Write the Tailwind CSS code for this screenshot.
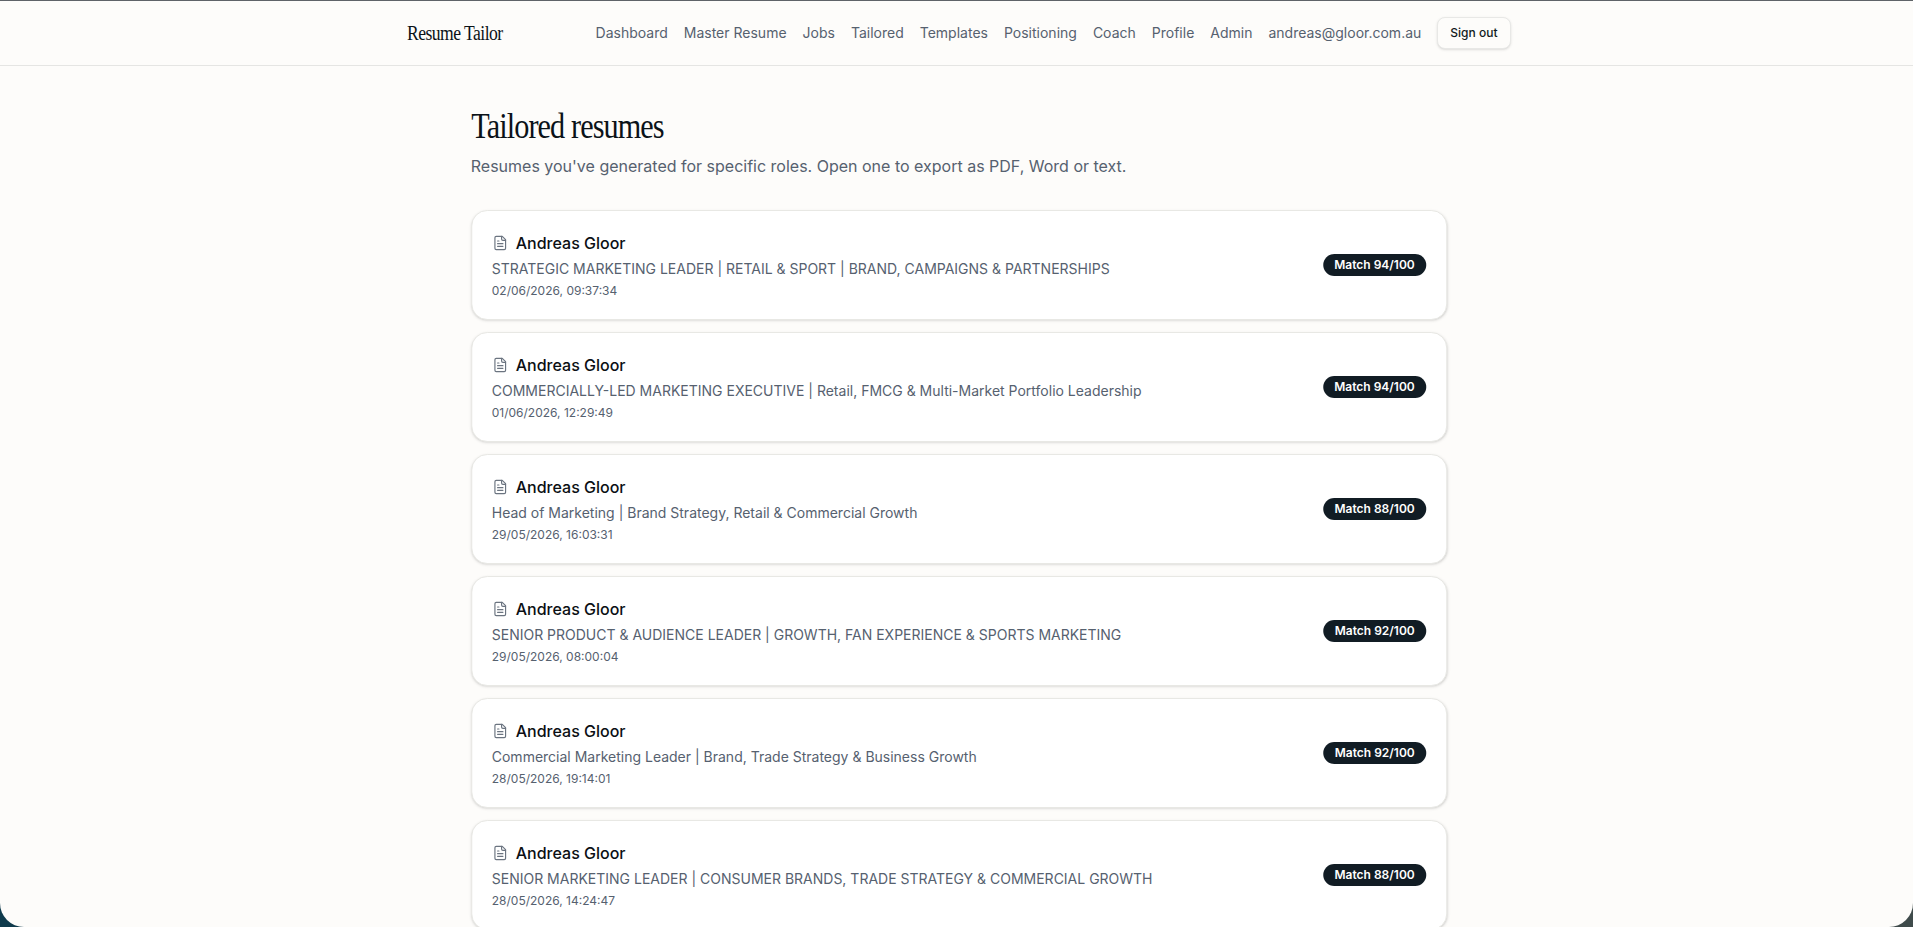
<!DOCTYPE html>
<html lang="en">
  <head>
    <meta charset="UTF-8" />
    <meta name="viewport" content="width=device-width, initial-scale=1.0" />
    <script src="https://cdn.jsdelivr.net/npm/@tailwindcss/browser@4"></script>
    <title>Tailored resumes - Resume Tailor</title>
  </head>
  <body class="h-[927px] overflow-hidden bg-gradient-to-r from-[#0f3a4c] to-[#3f4b4b] font-['Inter',sans-serif]">
    <div class="h-[927px] overflow-hidden rounded-b-[24px] border-t border-[#5f6368] bg-[#fdfcfa]">
      <!-- Nav -->
      <header class="border-b border-[#e5e5e3]">
        <div class="mx-auto flex h-16 max-w-6xl translate-x-[2px] items-center justify-between px-6">
          <a class="inline-block origin-left scale-x-[0.88] font-['Liberation_Serif',serif] text-xl tracking-[-0.03em] text-[#0b1218]">Resume Tailor</a>
          <nav class="flex items-center gap-4 text-sm text-[#56616f]">
            <a>Dashboard</a>
            <a>Master Resume</a>
            <a>Jobs</a>
            <a>Tailored</a>
            <a>Templates</a>
            <a>Positioning</a>
            <a>Coach</a>
            <a>Profile</a>
            <a>Admin</a>
            <a>andreas@gloor.com.au</a>
            <button class="h-8 rounded-lg border border-[#e8e8e6] bg-[#fdfcfa] px-3 text-xs font-medium text-[#111a21] shadow-sm">Sign out</button>
          </nav>
        </div>
      </header>

      <main class="mx-auto max-w-5xl translate-x-[2.25px] px-6 pt-10">
        <h1 class="origin-left scale-x-[0.84] font-['Liberation_Serif',serif] text-4xl leading-10 tracking-[-0.03em] text-[#0b1218]">Tailored resumes</h1>
        <p class="mt-2 text-base text-[#56616f]">Resumes you've generated for specific roles. Open one to export as PDF, Word or text.</p>

        <div class="mt-8 flex flex-col gap-3">
          <div class="flex h-[110px] items-center justify-between rounded-2xl border border-[#e8e8e4] bg-white px-5 shadow-sm">
            <div>
              <div class="flex items-center gap-2 font-medium text-[#0b0f14]">
                <svg class="h-4 w-4 text-[#6b7480]" viewBox="0 0 24 24" fill="none" stroke="currentColor" stroke-width="1.75" stroke-linecap="round" stroke-linejoin="round"><path d="M15 2H6a2 2 0 0 0-2 2v16a2 2 0 0 0 2 2h12a2 2 0 0 0 2-2V7Z" /><path d="M14 2v4a2 2 0 0 0 2 2h4" /><path d="M10 9H8" /><path d="M16 13H8" /><path d="M16 17H8" /></svg>
                Andreas Gloor
              </div>
              <div class="mt-1 text-sm text-[#56616f]">STRATEGIC MARKETING LEADER | RETAIL &amp; SPORT | BRAND, CAMPAIGNS &amp; PARTNERSHIPS</div>
              <div class="mt-1 text-xs text-[#56616f]">02/06/2026, 09:37:34</div>
            </div>
            <span class="rounded-full bg-[#111c24] px-[11px] py-[3px] text-xs font-semibold text-white">Match 94/100</span>
          </div>

          <div class="flex h-[110px] items-center justify-between rounded-2xl border border-[#e8e8e4] bg-white px-5 shadow-sm">
            <div>
              <div class="flex items-center gap-2 font-medium text-[#0b0f14]">
                <svg class="h-4 w-4 text-[#6b7480]" viewBox="0 0 24 24" fill="none" stroke="currentColor" stroke-width="1.75" stroke-linecap="round" stroke-linejoin="round"><path d="M15 2H6a2 2 0 0 0-2 2v16a2 2 0 0 0 2 2h12a2 2 0 0 0 2-2V7Z" /><path d="M14 2v4a2 2 0 0 0 2 2h4" /><path d="M10 9H8" /><path d="M16 13H8" /><path d="M16 17H8" /></svg>
                Andreas Gloor
              </div>
              <div class="mt-1 text-sm text-[#56616f]">COMMERCIALLY-LED MARKETING EXECUTIVE | Retail, FMCG &amp; Multi-Market Portfolio Leadership</div>
              <div class="mt-1 text-xs text-[#56616f]">01/06/2026, 12:29:49</div>
            </div>
            <span class="rounded-full bg-[#111c24] px-[11px] py-[3px] text-xs font-semibold text-white">Match 94/100</span>
          </div>

          <div class="flex h-[110px] items-center justify-between rounded-2xl border border-[#e8e8e4] bg-white px-5 shadow-sm">
            <div>
              <div class="flex items-center gap-2 font-medium text-[#0b0f14]">
                <svg class="h-4 w-4 text-[#6b7480]" viewBox="0 0 24 24" fill="none" stroke="currentColor" stroke-width="1.75" stroke-linecap="round" stroke-linejoin="round"><path d="M15 2H6a2 2 0 0 0-2 2v16a2 2 0 0 0 2 2h12a2 2 0 0 0 2-2V7Z" /><path d="M14 2v4a2 2 0 0 0 2 2h4" /><path d="M10 9H8" /><path d="M16 13H8" /><path d="M16 17H8" /></svg>
                Andreas Gloor
              </div>
              <div class="mt-1 text-sm text-[#56616f]">Head of Marketing | Brand Strategy, Retail &amp; Commercial Growth</div>
              <div class="mt-1 text-xs text-[#56616f]">29/05/2026, 16:03:31</div>
            </div>
            <span class="rounded-full bg-[#111c24] px-[11px] py-[3px] text-xs font-semibold text-white">Match 88/100</span>
          </div>

          <div class="flex h-[110px] items-center justify-between rounded-2xl border border-[#e8e8e4] bg-white px-5 shadow-sm">
            <div>
              <div class="flex items-center gap-2 font-medium text-[#0b0f14]">
                <svg class="h-4 w-4 text-[#6b7480]" viewBox="0 0 24 24" fill="none" stroke="currentColor" stroke-width="1.75" stroke-linecap="round" stroke-linejoin="round"><path d="M15 2H6a2 2 0 0 0-2 2v16a2 2 0 0 0 2 2h12a2 2 0 0 0 2-2V7Z" /><path d="M14 2v4a2 2 0 0 0 2 2h4" /><path d="M10 9H8" /><path d="M16 13H8" /><path d="M16 17H8" /></svg>
                Andreas Gloor
              </div>
              <div class="mt-1 text-sm text-[#56616f]">SENIOR PRODUCT &amp; AUDIENCE LEADER | GROWTH, FAN EXPERIENCE &amp; SPORTS MARKETING</div>
              <div class="mt-1 text-xs text-[#56616f]">29/05/2026, 08:00:04</div>
            </div>
            <span class="rounded-full bg-[#111c24] px-[11px] py-[3px] text-xs font-semibold text-white">Match 92/100</span>
          </div>

          <div class="flex h-[110px] items-center justify-between rounded-2xl border border-[#e8e8e4] bg-white px-5 shadow-sm">
            <div>
              <div class="flex items-center gap-2 font-medium text-[#0b0f14]">
                <svg class="h-4 w-4 text-[#6b7480]" viewBox="0 0 24 24" fill="none" stroke="currentColor" stroke-width="1.75" stroke-linecap="round" stroke-linejoin="round"><path d="M15 2H6a2 2 0 0 0-2 2v16a2 2 0 0 0 2 2h12a2 2 0 0 0 2-2V7Z" /><path d="M14 2v4a2 2 0 0 0 2 2h4" /><path d="M10 9H8" /><path d="M16 13H8" /><path d="M16 17H8" /></svg>
                Andreas Gloor
              </div>
              <div class="mt-1 text-sm text-[#56616f]">Commercial Marketing Leader | Brand, Trade Strategy &amp; Business Growth</div>
              <div class="mt-1 text-xs text-[#56616f]">28/05/2026, 19:14:01</div>
            </div>
            <span class="rounded-full bg-[#111c24] px-[11px] py-[3px] text-xs font-semibold text-white">Match 92/100</span>
          </div>

          <div class="flex h-[110px] items-center justify-between rounded-2xl border border-[#e8e8e4] bg-white px-5 shadow-sm">
            <div>
              <div class="flex items-center gap-2 font-medium text-[#0b0f14]">
                <svg class="h-4 w-4 text-[#6b7480]" viewBox="0 0 24 24" fill="none" stroke="currentColor" stroke-width="1.75" stroke-linecap="round" stroke-linejoin="round"><path d="M15 2H6a2 2 0 0 0-2 2v16a2 2 0 0 0 2 2h12a2 2 0 0 0 2-2V7Z" /><path d="M14 2v4a2 2 0 0 0 2 2h4" /><path d="M10 9H8" /><path d="M16 13H8" /><path d="M16 17H8" /></svg>
                Andreas Gloor
              </div>
              <div class="mt-1 text-sm text-[#56616f]">SENIOR MARKETING LEADER | CONSUMER BRANDS, TRADE STRATEGY &amp; COMMERCIAL GROWTH</div>
              <div class="mt-1 text-xs text-[#56616f]">28/05/2026, 14:24:47</div>
            </div>
            <span class="rounded-full bg-[#111c24] px-[11px] py-[3px] text-xs font-semibold text-white">Match 88/100</span>
          </div>
        </div>
      </main>
    </div>
  </body>
</html>
